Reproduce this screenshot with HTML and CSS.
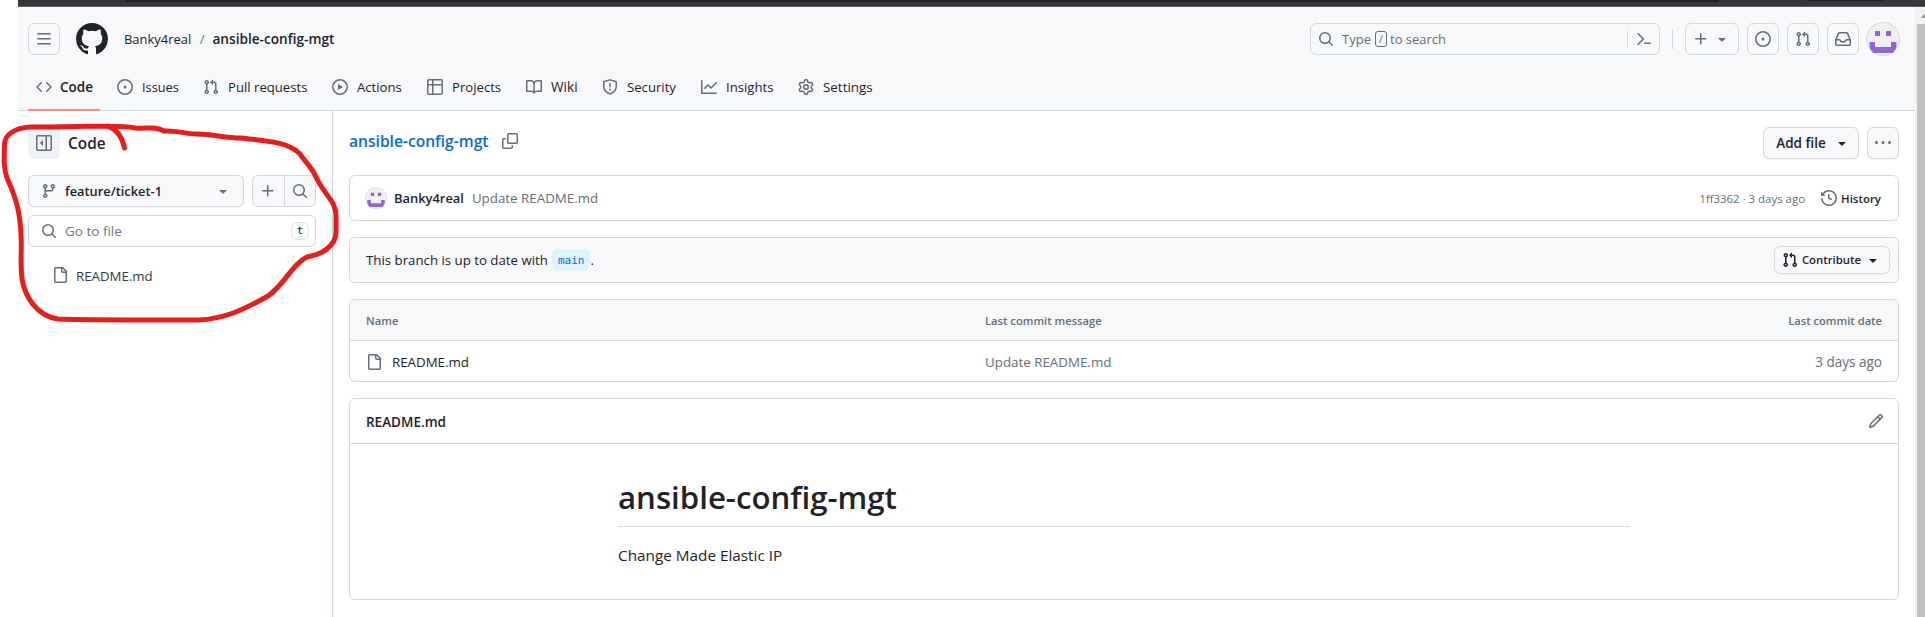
FILE: index.html
```html
<!DOCTYPE html>
<html lang="en">
<head>
<meta charset="utf-8">
<title>Banky4real/ansible-config-mgt</title>
<link rel="stylesheet" href="styles.css">
</head>
<body>
<svg class="defs" aria-hidden="true">
  <symbol id="bars" viewBox="0 0 16 16"><path d="M1 2.75A.75.75 0 0 1 1.75 2h12.5a.75.75 0 0 1 0 1.5H1.75A.75.75 0 0 1 1 2.75Zm0 5A.75.75 0 0 1 1.75 7h12.5a.75.75 0 0 1 0 1.5H1.75A.75.75 0 0 1 1 7.75ZM1.75 12h12.5a.75.75 0 0 1 0 1.5H1.75a.75.75 0 0 1 0-1.5Z"/></symbol>
  <symbol id="mark" viewBox="0 0 16 16"><path d="M8 0c4.42 0 8 3.58 8 8a8.013 8.013 0 0 1-5.45 7.59c-.4.08-.55-.17-.55-.38 0-.27.01-1.13.01-2.2 0-.75-.25-1.23-.54-1.48 1.78-.2 3.65-.88 3.65-3.95 0-.88-.31-1.59-.82-2.15.08-.2.36-1.02-.08-2.12 0 0-.67-.22-2.2.82-.64-.18-1.32-.27-2-.27-.68 0-1.36.09-2 .27-1.53-1.03-2.2-.82-2.2-.82-.44 1.1-.16 1.92-.08 2.12-.51.56-.82 1.28-.82 2.15 0 3.06 1.86 3.75 3.64 3.95-.23.2-.44.55-.51 1.07-.46.21-1.61.55-2.33-.66-.15-.24-.6-.83-1.23-.82-.67.01-.27.38.01.53.34.19.73.9.82 1.13.16.45.68 1.31 2.69.94 0 .67.01 1.3.01 1.49 0 .21-.15.45-.55.38A7.995 7.995 0 0 1 0 8c0-4.42 3.58-8 8-8Z"/></symbol>
  <symbol id="code" viewBox="0 0 16 16"><path d="m11.28 3.22 4.25 4.25a.75.75 0 0 1 0 1.06l-4.25 4.25a.749.749 0 0 1-1.275-.326.749.749 0 0 1 .215-.734L13.94 8l-3.72-3.72a.749.749 0 0 1 .326-1.275.749.749 0 0 1 .734.215Zm-6.56 0a.751.751 0 0 1 1.042.018.751.751 0 0 1 .018 1.042L2.06 8l3.72 3.72a.749.749 0 0 1-.326 1.275.749.749 0 0 1-.734-.215L.47 8.53a.75.75 0 0 1 0-1.06Z"/></symbol>
  <symbol id="issue" viewBox="0 0 16 16"><path d="M8 9.5a1.5 1.5 0 1 0 0-3 1.5 1.5 0 0 0 0 3Z"/><path d="M8 0a8 8 0 1 1 0 16A8 8 0 0 1 8 0ZM1.5 8a6.5 6.5 0 1 0 13 0 6.5 6.5 0 0 0-13 0Z"/></symbol>
  <symbol id="pull" viewBox="0 0 16 16"><path d="M1.5 3.25a2.25 2.25 0 1 1 3 2.122v5.256a2.251 2.251 0 1 1-1.5 0V5.372A2.25 2.25 0 0 1 1.5 3.25Zm5.677-.177L9.573.677A.25.25 0 0 1 10 .854V2.5h1A2.5 2.5 0 0 1 13.500 5v5.628a2.251 2.251 0 1 1-1.5 0V5a1 1 0 0 0-1-1h-1v1.646a.25.25 0 0 1-.427.177L7.177 3.427a.25.25 0 0 1 0-.354ZM3.75 2.500a.75.75 0 1 0 0 1.5.75.75 0 0 0 0-1.500Zm0 9.500a.75.75 0 1 0 0 1.500.75.75 0 0 0 0-1.500Zm8.250.750a.75.75 0 1 0 1.500 0 .75.75 0 0 0-1.500 0Z"/></symbol>
  <symbol id="play" viewBox="0 0 16 16"><path d="M8 0a8 8 0 1 1 0 16A8 8 0 0 1 8 0ZM1.500 8a6.500 6.500 0 1 0 13 0 6.500 6.500 0 0 0-13 0Zm4.879-2.773 4.264 2.559a.25.25 0 0 1 0 .428l-4.264 2.559A.25.25 0 0 1 6 10.559V5.442a.25.25 0 0 1 .379-.215Z"/></symbol>
  <symbol id="table" viewBox="0 0 16 16"><path d="M0 1.75C0 .784.784 0 1.750 0h12.500C15.216 0 16 .784 16 1.750v12.500A1.750 1.750 0 0 1 14.250 16H1.750A1.750 1.750 0 0 1 0 14.250ZM6.500 6.500v8h7.750a.25.25 0 0 0 .25-.25V6.500Zm8-1.500V1.750a.25.25 0 0 0-.25-.25H6.500V5Zm-13 1.500v7.750c0 .138.112.25.25.25H5v-8ZM5 5V1.500H1.750a.25.25 0 0 0-.25.25V5Z"/></symbol>
  <symbol id="book" viewBox="0 0 16 16"><path d="M0 1.750A.75.75 0 0 1 .75 1h4.253c1.227 0 2.317.59 3 1.501A3.743 3.743 0 0 1 11.006 1h4.245a.75.75 0 0 1 .75.75v10.500a.75.75 0 0 1-.75.75h-4.507a2.250 2.250 0 0 0-1.591.659l-.622.621a.75.75 0 0 1-1.060 0l-.622-.621A2.250 2.250 0 0 0 5.258 13H.75a.75.75 0 0 1-.75-.75Zm7.251 10.324.004-5.073-.002-2.253A2.250 2.250 0 0 0 5.003 2.500H1.500v9h3.757a3.750 3.750 0 0 1 1.994.574ZM8.755 4.750l-.004 7.322a3.752 3.752 0 0 1 1.992-.572H14.500v-9h-3.495a2.250 2.250 0 0 0-2.250 2.250Z"/></symbol>
  <symbol id="shield" viewBox="0 0 16 16"><path d="M7.467.133a1.748 1.748 0 0 1 1.066 0l5.250 1.680A1.750 1.750 0 0 1 15 3.480V7c0 1.566-.32 3.182-1.303 4.682-.983 1.498-2.585 2.813-5.032 3.855a1.697 1.697 0 0 1-1.330 0c-2.447-1.042-4.049-2.357-5.032-3.855C1.320 10.182 1 8.566 1 7V3.480a1.755 1.755 0 0 1 1.217-1.667Zm.610 1.429a.25.25 0 0 0-.153 0l-5.250 1.680a.25.25 0 0 0-.174.238V7c0 1.358.275 2.666 1.057 3.860.784 1.194 2.121 2.340 4.366 3.297a.196.196 0 0 0 .154 0c2.245-.956 3.582-2.104 4.366-3.298C13.225 9.666 13.500 8.360 13.500 7V3.480a.251.251 0 0 0-.174-.237ZM8.750 4.750v3a.75.75 0 0 1-1.500 0v-3a.75.75 0 0 1 1.500 0ZM9 10.500a1 1 0 1 1-2 0 1 1 0 0 1 2 0Z"/></symbol>
  <symbol id="graph" viewBox="0 0 16 16"><path d="M1.500 1.750V13.500h13.750a.75.75 0 0 1 0 1.500H.75a.75.75 0 0 1-.75-.75V1.750a.75.75 0 0 1 1.500 0Zm14.280 2.530-5.250 5.250a.75.75 0 0 1-1.060 0L7 7.060 4.280 9.780a.751.751 0 0 1-1.042-.018.751.751 0 0 1-.018-1.042l3.250-3.250a.75.75 0 0 1 1.060 0L10 7.940l4.720-4.720a.751.751 0 0 1 1.042.018.751.751 0 0 1 .018 1.042Z"/></symbol>
  <symbol id="gear" viewBox="0 0 16 16"><path d="M8 0a8.200 8.200 0 0 1 .701.031C9.444.095 9.990.645 10.160 1.290l.288 1.107c.018.066.079.158.212.224.231.114.454.243.668.386.123.082.233.090.299.071l1.103-.303c.644-.176 1.392.021 1.820.630.270.385.506.792.704 1.218.315.675.111 1.422-.364 1.891l-.814.806c-.049.048-.098.147-.088.294.016.257.016.515 0 .772-.010.147.038.246.088.294l.814.806c.475.469.679 1.216.364 1.891a7.977 7.977 0 0 1-.704 1.217c-.428.610-1.176.807-1.820.630l-1.102-.302c-.067-.019-.177-.011-.300.071a5.909 5.909 0 0 1-.668.386c-.133.066-.194.158-.211.224l-.290 1.106c-.168.646-.715 1.196-1.458 1.260a8.006 8.006 0 0 1-1.402 0c-.743-.064-1.289-.614-1.458-1.260l-.289-1.106c-.018-.066-.079-.158-.212-.224a5.738 5.738 0 0 1-.668-.386c-.123-.082-.233-.090-.299-.071l-1.103.303c-.644.176-1.392-.021-1.820-.630a8.120 8.120 0 0 1-.704-1.218c-.315-.675-.111-1.422.363-1.891l.815-.806c.050-.048.098-.147.088-.294a6.214 6.214 0 0 1 0-.772c.010-.147-.038-.246-.088-.294l-.815-.806C.635 6.045.431 5.298.746 4.623a7.920 7.920 0 0 1 .704-1.217c.428-.610 1.176-.807 1.820-.630l1.102.302c.067.019.177.011.300-.071.214-.143.437-.272.668-.386.133-.066.194-.158.211-.224l.290-1.106C6.009.645 6.556.095 7.299.030 7.530.010 7.764 0 8 0Zm-.571 1.525c-.036.003-.108.036-.137.146l-.289 1.105c-.147.561-.549.967-.998 1.189-.173.086-.340.183-.500.290-.417.278-.970.423-1.529.270l-1.103-.303c-.109-.030-.175.016-.195.045-.220.312-.412.644-.573.990-.014.031-.021.110.059.190l.815.806c.411.406.562.957.530 1.456a4.709 4.709 0 0 0 0 .582c.032.499-.119 1.050-.530 1.456l-.815.806c-.081.080-.073.159-.059.190.162.346.353.677.573.989.020.030.085.076.195.046l1.102-.303c.560-.153 1.113-.008 1.530.270.161.107.328.204.501.290.447.222.850.629.997 1.189l.289 1.105c.029.109.101.143.137.146a6.600 6.600 0 0 0 1.142 0c.036-.003.108-.036.137-.146l.289-1.105c.147-.561.549-.967.998-1.189.173-.086.340-.183.500-.290.417-.278.970-.423 1.529-.270l1.103.303c.109.029.175-.016.195-.045.220-.313.411-.644.573-.990.014-.031.021-.110-.059-.190l-.815-.806c-.411-.406-.562-.957-.530-1.456a4.709 4.709 0 0 0 0-.582c-.032-.499.119-1.050.530-1.456l.815-.806c.081-.080.073-.159.059-.190a6.464 6.464 0 0 0-.573-.989c-.020-.030-.085-.076-.195-.046l-1.102.303c-.560.153-1.113.008-1.530-.270a4.440 4.440 0 0 0-.501-.290c-.447-.222-.850-.629-.997-1.189l-.289-1.105c-.029-.110-.101-.143-.137-.146a6.600 6.600 0 0 0-1.142 0ZM11 8a3 3 0 1 1-6 0 3 3 0 0 1 6 0ZM9.500 8a1.500 1.500 0 1 0-3.001.001A1.500 1.500 0 0 0 9.500 8Z"/></symbol>
  <symbol id="search" viewBox="0 0 16 16"><path d="M10.680 11.740a6 6 0 0 1-7.922-8.982 6 6 0 0 1 8.982 7.922l3.040 3.040a.749.749 0 0 1-.326 1.275.749.749 0 0 1-.734-.215ZM11.500 7a4.499 4.499 0 1 0-8.997 0A4.499 4.499 0 0 0 11.500 7Z"/></symbol>
  <symbol id="term" viewBox="0 0 16 16"><path d="m6.354 8.040-4.773 4.773a.75.75 0 1 0 1.061 1.060L7.945 8.570a.75.75 0 0 0 0-1.060L2.642 2.206a.75.75 0 0 0-1.060 1.061l4.773 4.773ZM8.750 11.500a.75.75 0 0 0 0 1.500h5.500a.75.75 0 0 0 0-1.500h-5.500Z"/></symbol>
  <symbol id="plus" viewBox="0 0 16 16"><path d="M7.750 2a.75.75 0 0 1 .75.75V7h4.250a.75.75 0 0 1 0 1.500H8.500v4.250a.75.75 0 0 1-1.500 0V8.500H2.750a.75.75 0 0 1 0-1.500H7V2.750A.75.75 0 0 1 7.750 2Z"/></symbol>
  <symbol id="caret" viewBox="0 0 16 16"><path d="m4.427 7.427 3.396 3.396a.25.25 0 0 0 .354 0l3.396-3.396A.25.25 0 0 0 11.396 7H4.604a.25.25 0 0 0-.177.427Z"/></symbol>
  <symbol id="inbox" viewBox="0 0 16 16"><path d="M2.800 2.060A1.750 1.750 0 0 1 4.410 1h7.180c.700 0 1.333.417 1.610 1.060l2.740 6.395c.040.093.060.194.060.295v4.500A1.750 1.750 0 0 1 14.250 15H1.750A1.750 1.750 0 0 1 0 13.250v-4.500c0-.101.020-.202.060-.295Zm1.610.440a.25.25 0 0 0-.230.152L1.887 8H4.750a.75.75 0 0 1 .600.300L6.625 10h2.750l1.275-1.700a.75.75 0 0 1 .600-.300h2.863L11.820 2.652a.25.25 0 0 0-.230-.152Zm10.090 7h-2.875l-1.275 1.700a.75.75 0 0 1-.600.300h-3.500a.75.75 0 0 1-.600-.300L4.375 9.500H1.500v3.750c0 .138.112.25.25.25h12.500a.25.25 0 0 0 .25-.25Z"/></symbol>
  <symbol id="panel" viewBox="0 0 16 16"><path d="m4.177 7.823 2.396-2.396A.25.25 0 0 1 7 5.604v4.792a.25.25 0 0 1-.427.177L4.177 8.177a.25.25 0 0 1 0-.354Z"/><path d="M0 1.750C0 .784.784 0 1.750 0h12.500C15.216 0 16 .784 16 1.750v12.500A1.750 1.750 0 0 1 14.250 16H1.750A1.750 1.750 0 0 1 0 14.250Zm1.750-.25a.25.25 0 0 0-.25.25v12.500c0 .138.112.25.25.25H9.500v-13Zm12.500 13a.25.25 0 0 0 .25-.25V1.750a.25.25 0 0 0-.25-.25H11v13Z"/></symbol>
  <symbol id="branch" viewBox="0 0 16 16"><path d="M9.500 3.250a2.250 2.250 0 1 1 3 2.122V6A2.500 2.500 0 0 1 10 8.500H6a1 1 0 0 0-1 1v1.128a2.251 2.251 0 1 1-1.500 0V5.372a2.250 2.250 0 1 1 1.500 0v1.836A2.493 2.493 0 0 1 6 7h4a1 1 0 0 0 1-1v-.628A2.250 2.250 0 0 1 9.500 3.250Zm-6 0a.75.75 0 1 0 1.500 0 .75.75 0 0 0-1.500 0Zm8.250-.75a.75.75 0 1 0 0 1.500.75.75 0 0 0 0-1.500ZM4.250 12a.75.75 0 1 0 0 1.500.75.75 0 0 0 0-1.500Z"/></symbol>
  <symbol id="file" viewBox="0 0 16 16"><path d="M2 1.750C2 .784 2.784 0 3.750 0h6.586c.464 0 .909.184 1.237.513l2.914 2.914c.329.328.513.773.513 1.237v9.586A1.750 1.750 0 0 1 13.250 16h-9.500A1.750 1.750 0 0 1 2 14.250Zm1.750-.25a.25.25 0 0 0-.25.25v12.500c0 .138.112.25.25.25h9.500a.25.25 0 0 0 .25-.25V6h-2.750A1.750 1.750 0 0 1 9 4.250V1.500Zm6.750.062V4.250c0 .138.112.25.25.25h2.688l-.011-.013-2.914-2.914-.013-.011Z"/></symbol>
  <symbol id="copy" viewBox="0 0 16 16"><path d="M0 6.750C0 5.784.784 5 1.750 5h1.500a.75.75 0 0 1 0 1.500h-1.500a.25.25 0 0 0-.25.25v7.500c0 .138.112.25.25.25h7.500a.25.25 0 0 0 .25-.25v-1.500a.75.75 0 0 1 1.500 0v1.500A1.750 1.750 0 0 1 9.250 16h-7.500A1.750 1.750 0 0 1 0 14.250Z"/><path d="M5 1.750C5 .784 5.784 0 6.750 0h7.500C15.216 0 16 .784 16 1.750v7.500A1.750 1.750 0 0 1 14.250 11h-7.500A1.750 1.750 0 0 1 5 9.250Zm1.750-.25a.25.25 0 0 0-.25.25v7.500c0 .138.112.25.25.25h7.500a.25.25 0 0 0 .25-.25v-7.500a.25.25 0 0 0-.25-.25Z"/></symbol>
  <symbol id="dots" viewBox="0 0 16 16"><path d="M8 9a1.500 1.500 0 1 0 0-3 1.500 1.500 0 0 0 0 3ZM1.500 9a1.500 1.500 0 1 0 0-3 1.500 1.500 0 0 0 0 3Zm13 0a1.500 1.500 0 1 0 0-3 1.500 1.500 0 0 0 0 3Z"/></symbol>
  <symbol id="history" viewBox="0 0 16 16"><path d="m.427 1.927 1.215 1.215a8.002 8.002 0 1 1-1.600 5.685.75.75 0 1 1 1.493-.154 6.500 6.500 0 1 0 1.180-4.458l1.358 1.358A.25.25 0 0 1 3.896 6H.25A.25.25 0 0 1 0 5.750V2.104a.25.25 0 0 1 .427-.177ZM7.750 4a.75.75 0 0 1 .75.75v2.992l2.028.812a.75.75 0 0 1-.557 1.392l-2.500-1A.751.751 0 0 1 7 8.250v-3.500A.75.75 0 0 1 7.750 4Z"/></symbol>
  <symbol id="pencil" viewBox="0 0 16 16"><path d="M11.013 1.427a1.750 1.750 0 0 1 2.474 0l1.086 1.086a1.750 1.750 0 0 1 0 2.474l-8.610 8.610c-.210.210-.470.364-.756.445l-3.251.930a.75.75 0 0 1-.927-.928l.929-3.250c.081-.286.235-.547.445-.758l8.610-8.610Zm.176 4.823L9.750 4.810l-6.286 6.287a.253.253 0 0 0-.064.108l-.558 1.953 1.953-.558a.253.253 0 0 0 .108-.064Zm1.238-3.763a.25.25 0 0 0-.354 0L10.811 3.750l1.439 1.440 1.263-1.263a.25.25 0 0 0 0-.354Z"/></symbol>
  <symbol id="face" viewBox="0 0 34 34"><circle cx="17" cy="17" r="16.500" fill="#f0f0f0" stroke="#d5d8dc"/><path fill="#8f65d0" d="M9 9h5v5H9zM20 9h5v5h-5zM3.600 20H9v5h16v-5h5.400v5.200q-1 3.200-3.600 5.800H7.200q-2.600-2.600-3.600-5.800z"/></symbol>
</svg>

<div class="chrome"><div class="chrome-bar"></div><div class="chrome-tab"></div></div>

<div class="shell">
  <div class="page">
    <header class="header">
      <div class="topbar">
        <button class="btn square clear"><svg class="i"><use href="#bars"/></svg></button>
        <svg class="logo"><use href="#mark"/></svg>
        <div class="crumbs"><span class="owner">Banky4real</span><span class="sep">/</span><span class="repo">ansible-config-mgt</span></div>
        <div class="search">
          <svg class="i"><use href="#search"/></svg>
          <span class="type">Type</span><span class="slash">/</span><span class="to">to search</span>
          <span class="cmd"><svg class="i"><use href="#term"/></svg></span>
        </div>
        <div class="divider"></div>
        <button class="btn clear add"><svg class="i"><use href="#plus"/></svg><svg class="i"><use href="#caret"/></svg></button>
        <button class="btn square clear"><svg class="i"><use href="#issue"/></svg></button>
        <button class="btn square clear"><svg class="i"><use href="#pull"/></svg></button>
        <button class="btn square clear"><svg class="i"><use href="#inbox"/></svg></button>
        <svg class="avatar"><use href="#face"/></svg>
      </div>
      <nav class="tabs">
        <a class="tab active"><svg class="i"><use href="#code"/></svg>Code</a>
        <a class="tab t-issues"><svg class="i"><use href="#issue"/></svg>Issues</a>
        <a class="tab"><svg class="i"><use href="#pull"/></svg>Pull requests</a>
        <a class="tab"><svg class="i"><use href="#play"/></svg>Actions</a>
        <a class="tab"><svg class="i"><use href="#table"/></svg>Projects</a>
        <a class="tab t-wiki"><svg class="i"><use href="#book"/></svg>Wiki</a>
        <a class="tab"><svg class="i"><use href="#shield"/></svg>Security</a>
        <a class="tab"><svg class="i"><use href="#graph"/></svg>Insights</a>
        <a class="tab t-settings"><svg class="i"><use href="#gear"/></svg>Settings</a>
      </nav>
    </header>

    <div class="body">
      <aside class="side">
        <div class="side-head"><button class="btn square panel"><svg class="i"><use href="#panel"/></svg></button><span>Code</span></div>
        <div class="side-row">
          <button class="btn branch"><svg class="i"><use href="#branch"/></svg><span>feature/ticket-1</span><svg class="i"><use href="#caret"/></svg></button>
          <div class="group"><button><svg class="i"><use href="#plus"/></svg></button><button><svg class="i"><use href="#search"/></svg></button></div>
        </div>
        <div class="goto"><svg class="i"><use href="#search"/></svg><span>Go to file</span><kbd>t</kbd></div>
        <div class="tree"><svg class="i"><use href="#file"/></svg><span>README.md</span></div>
      </aside>

      <main class="main">
        <div class="title-row">
          <div class="title"><a>ansible-config-mgt</a><svg class="i"><use href="#copy"/></svg></div>
          <button class="btn add-file"><span>Add file</span><svg class="i dark"><use href="#caret"/></svg></button>
          <button class="btn square"><svg class="i"><use href="#dots"/></svg></button>
        </div>

        <section class="box commit">
          <svg class="face"><use href="#face"/></svg><b>Banky4real</b><span class="msg">Update README.md</span>
          <span class="hash">1ff3362 · 3 days ago</span><svg class="i"><use href="#history"/></svg><span class="hist">History</span>
        </section>

        <section class="box status">
          <span>This branch is up to date with</span><code>main</code><span>.</span>
          <button class="btn contribute"><svg class="i dark"><use href="#pull"/></svg><span>Contribute</span><svg class="i dark"><use href="#caret"/></svg></button>
        </section>

        <section class="box files">
          <div class="row head"><span>Name</span><span>Last commit message</span><span>Last commit date</span></div>
          <div class="row"><span class="name"><svg class="i"><use href="#file"/></svg>README.md</span><span>Update README.md</span><span class="date">3 days ago</span></div>
        </section>

        <section class="box readme">
          <div class="readme-head"><span>README.md</span><svg class="i"><use href="#pencil"/></svg></div>
          <article><h1>ansible-config-mgt</h1><p>Change Made Elastic IP</p></article>
        </section>
      </main>
    </div>
  </div>
  <div class="scroll"><svg class="up" viewBox="0 0 8 5"><path d="M0 5 4 0l4 5z"/></svg><div class="thumb"></div></div>
</div>

<svg class="ink" viewBox="0 0 350 330"><path d="M124.500 148C122 137 117 129 107 126C87 126 60 127 30 127C16 128 4 134 4.500 145C4 158 3.500 168 7 178C17 200 20 213 21 235C22 250 20 262 22 279C25 297 37 316 58 319C80 320 110 320 198 320C225 319 245 309 268 296C285 284 292 264 307 257C320 255 336 247 336 232L336 216C336 201 325 196 316 177C311 166 305 162 300 154C287 141 265 141 241 138C225 138 212 134 197 134C185 134 176 130 164 131C155 126 148 129 135 128C125 126 114 127 107 126"/></svg>
</body>
</html>
```
FILE: styles.css
```css
* { box-sizing: border-box; }

body {
  margin: 0;
  width: 1925px;
  height: 617px;
  overflow: hidden;
  position: relative;
  display: flex;
  flex-direction: column;
  background: #fff;
  color: #1f2328;
  font: 13.15px/20px "Open Sans", "Noto Sans", sans-serif;
  white-space: nowrap;
}

button { font: inherit; color: inherit; padding: 0; margin: 0; }
.defs { display: none; }
.i { width: 16px; height: 16px; flex: none; fill: #656d76; }
.i.dark { fill: #1f2328; }

/* Browser strip above the page */
.chrome {
  height: 7px;
  flex: none;
  margin-left: 18px;
  padding-left: 107px;
  display: flex;
  gap: 88px;
  background: #35363a;
  border-bottom: 1px solid #5c5a5e;
}
.chrome-bar { flex: none; width: 1594px; height: 2px; background: #202124; border-radius: 0 0 6px 6px; }
.chrome-tab { flex: none; width: 76px; height: 1px; background: #202124; }

.shell { flex: 1; display: flex; min-height: 0; margin-left: 18px; }
.page { flex: 1; display: flex; flex-direction: column; }

/* Scrollbar */
.scroll { width: 10px; background: #f1f1f1; display: flex; flex-direction: column; padding-left: 2px; overflow: hidden; }
.up { width: 8px; height: 4px; margin: 7px 0 6px 3px; fill: #a3a3a3; flex: none; }
.thumb { flex: 1; background: #c1c1c1; }

.btn {
  height: 32px;
  display: flex;
  align-items: center;
  justify-content: center;
  background: #f6f8fa;
  border: 1px solid #d5d8dc;
  border-radius: 6px;
  box-shadow: 0 1px 0 rgba(31, 35, 40, .04);
}
.square { width: 32px; flex: none; }
.clear { border-color: #d0d7de; box-shadow: none; }

/* Header */
.header { height: 104px; flex: none; background: #f6f8fa; border-bottom: 1px solid #d0d7de; }
.topbar { display: flex; align-items: center; height: 65px; padding: 0 15px 1px 10px; }
.logo { width: 32px; height: 32px; margin-left: 16px; fill: #1f2328; }
.crumbs { display: flex; flex: 1; margin-left: 16px; font-size: 12.95px; }
.sep { margin: 0 8px 0 8.5px; color: #656d76; }
.repo { font-weight: 600; font-size: 13.65px; }
.search {
  width: 350px;
  height: 32px;
  display: flex;
  align-items: center;
  padding-left: 7px;
  border: 1px solid #d0d7de;
  border-radius: 6px;
  color: #656d76;
  font-size: 13px;
}
.type { margin-left: 8px; width: 33px; }
.slash { width: 12px; height: 16px; border: 1px solid #656d76; border-radius: 3px; text-align: center; font-size: 11px; line-height: 14px; }
.to { margin-left: 3px; }
.cmd { margin-left: auto; margin-right: 7px; padding-left: 8px; height: 16px; border-left: 1px solid #d0d7de; }
.cmd .i { display: block; }
.divider { width: 1px; height: 20px; margin: 0 12px; background: #d0d7de; }
.add { width: 54px; gap: 5px; margin-right: 8px; padding-right: 1px; }
.topbar .square + .square { margin-left: 8px; }
.avatar { width: 34px; height: 34px; margin-left: 7px; }

.tabs { display: grid; grid-template-columns: 81px 86px 129px 95px 99px 76px 99px 97px 92px; padding-left: 10px; height: 39px; }
.tab { display: flex; align-items: center; gap: 9px; height: 32px; padding: 0 0 2px 8px; }
.t-issues { font-size: 12.75px; }
.t-wiki { font-size: 13.6px; }
.t-settings { font-size: 13.4px; }
.tab.active { position: relative; width: 72px; gap: 8px; font-weight: 600; font-size: 13.5px; }
.tab.active::after { content: ""; position: absolute; left: 0; bottom: -7px; width: 72px; height: 2px; background: #fd8c73; border-radius: 1px; }

.body { flex: 1; display: flex; min-height: 0; }

/* File tree */
.side { width: 315px; flex: none; padding: 16px 16px 0 10px; border-right: 1px solid #d0d7de; }
.side-head { display: flex; align-items: center; gap: 8px; font-size: 15.4px; font-weight: 600; }
.side-head span { padding-top: 2px; }
.panel { background: #eff1f4; border-color: #eff1f4; box-shadow: none; }
.side-row { display: flex; gap: 8px; margin-top: 16px; }
.branch { width: 216px; padding: 0 12px; gap: 8px; font-weight: 600; font-size: 12.85px; }
.branch span { flex: 1; text-align: left; }
.group { display: flex; width: 64px; height: 32px; background: #f6f8fa; border: 1px solid #d5d8dc; border-radius: 6px; }
.group button { flex: 1; display: flex; align-items: center; justify-content: center; background: none; border: 0; }
.group button + button { border-left: 1px solid #d5d8dc; }
.goto { display: flex; align-items: center; gap: 8px; height: 32px; margin-top: 8px; padding: 0 6px 0 12px; border: 1px solid #d0d7de; border-radius: 6px; color: #6e7781; font-size: 13.5px; }
.goto kbd { width: 18px; height: 18px; margin-left: auto; background: #f6f8fa; border: 1px solid #dfe3e7; border-radius: 6px; color: #1f2328; font: 11px/15px "DejaVu Sans Mono", monospace; text-align: center; }
.tree { display: flex; align-items: center; gap: 8px; margin-top: 18px; padding-left: 24px; height: 20px; font-size: 13.25px; color: #32383f; }
.tree span { padding-top: 2px; }

/* Content */
.main { flex: 1; padding: 16px 16px 0; display: flex; flex-direction: column; gap: 16px; }
.title-row { display: flex; align-items: center; gap: 8px; }
.title { flex: 1; display: flex; align-items: center; gap: 14px; padding-bottom: 4px; font-size: 15.6px; font-weight: 600; color: #0969da; }
.add-file { width: 96px; gap: 8px; padding-left: 4px; font-weight: 600; font-size: 13.5px; }
.box { border: 1px solid #d0d7de; border-radius: 6px; }
.commit { display: flex; align-items: center; height: 46px; padding: 0 17px 0 15px; }
.face { width: 22px; height: 22px; margin-right: 7px; }
.commit b { font-weight: 600; font-size: 12.9px; margin-right: 8px; }
.msg { color: #656d76; flex: 1; font-size: 13.35px; }
.hash { color: #656d76; font-size: 11.45px; padding-top: 1px; margin-right: 16px; }
.hist { font-weight: 600; font-size: 11.45px; margin-left: 4px; padding-top: 1px; }
.status { display: flex; align-items: center; height: 46px; padding: 0 8px 0 16px; background: #f6f8fa; font-size: 13.26px; }
.status code { height: 22px; margin: 0 0 0 4px; padding: 0 6px; border-radius: 6px; background: #ddf4ff; color: #0969da; font: 11px/23px "DejaVu Sans Mono", monospace; }
.contribute { width: 116px; height: 28px; margin-left: auto; gap: 4px; padding-right: 1px; font-weight: 600; font-size: 11.35px; }
.files { height: 83px; overflow: hidden; }
.row { display: grid; grid-template-columns: 619px 1fr auto; align-items: center; height: 41px; padding: 0 16px; color: #656d76; font-size: 13.35px; }
.row.head { padding-top: 1px; background: #f6f8fa; border-bottom: 1px solid #d0d7de; font-size: 11.2px; font-weight: 600; }
.name { display: flex; align-items: center; gap: 10px; color: #1f2328; font-size: 13.3px; }
.date { font-size: 13.55px; }
.readme { height: 202px; }
.readme-head { display: flex; align-items: center; justify-content: space-between; height: 45px; padding: 0 14px 0 16px; border-bottom: 1px solid #d0d7de; font-size: 13.5px; font-weight: 600; }
.readme-head span { padding-top: 2px; }
article { width: 1012px; margin: 32px auto 0; }
h1 { margin: 0; height: 51px; border-bottom: 1px solid #d8dee4; font-size: 31.2px; line-height: 42px; font-weight: 600; }
p { margin: 16px 0 0; font-size: 15.3px; line-height: 24px; }

/* Freehand marker drawn over the page */
.ink { position: absolute; left: 0; top: 0; width: 350px; height: 330px; fill: none; stroke: #e71d1d; stroke-width: 5; stroke-linecap: round; stroke-linejoin: round; pointer-events: none; }
```
